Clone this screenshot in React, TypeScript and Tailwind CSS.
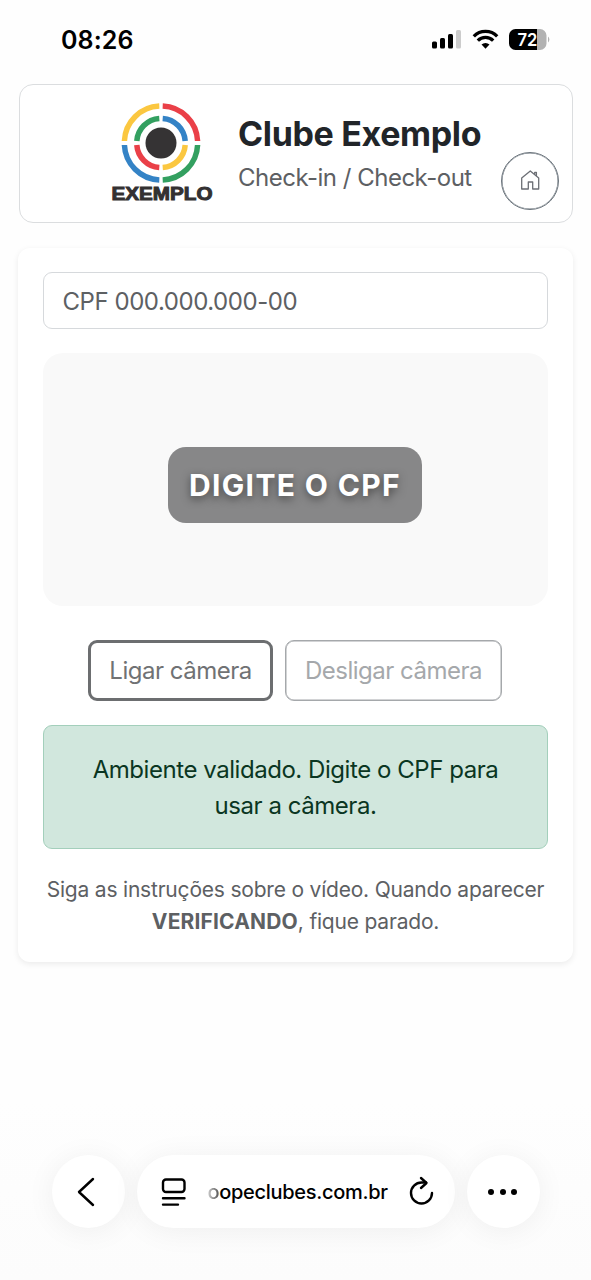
import React from "react";

const StatusBar: React.FC = () => {
  return (
    <div className="flex items-start justify-between h-[84px] pl-[61px] pr-[40px] pt-[22px] text-black">
      <span className="text-[25px] leading-9 font-semibold tracking-[0.1px]">08:26</span>
      <svg width="120" height="24" viewBox="0 0 120 24" className="mt-[6px]">
        <rect x="1" y="13.5" width="5" height="7" rx="1.5" />
        <rect x="9" y="10" width="5" height="10.5" rx="1.5" />
        <rect x="17" y="6" width="5" height="14.5" rx="1.5" />
        <rect x="25" y="2" width="5" height="18.5" rx="1.5" fill="#cccccc" />
        <g fill="none" stroke="#000" strokeWidth="3.3">
          <path d="M42.8 8.3a16.3 16.3 0 0 1 23.4 0" />
          <path d="M46.8 12.6a10.7 10.7 0 0 1 15.4 0" />
        </g>
        <path d="M54.5 20.8l-4-4.2a5.8 5.8 0 0 1 8 0z" />
        <path d="M84.5 1H106v21H84.5a6.5 6.5 0 0 1-6.5-6.5v-8a6.5 6.5 0 0 1 6.5-6.5z" />
        <path d="M106 1h3a6.5 6.5 0 0 1 6.5 6.5v8a6.5 6.5 0 0 1-6.5 6.5h-3z" fill="#b2b2b2" />
        <path d="M117 8.5a4 4 0 0 1 0 6z" fill="#b2b2b2" />
        <text x="86.5" y="17.5" fontSize="17.5" fontWeight="600" fill="#fff" textLength="20" lengthAdjust="spacingAndGlyphs">
          72
        </text>
      </svg>
    </div>
  );
};

const Logo: React.FC = () => {
  return (
    <svg width="104" height="102" viewBox="0 0 104 102" className="-mt-[2px]">
      <g fill="none" strokeWidth="5.5">
        <path d="M13.4 39A36.5 36.5 0 0 1 48.3 4.1" stroke="#fbc740" />
        <path d="M51.7 4.1A36.5 36.5 0 0 1 86.6 39" stroke="#ea4048" />
        <path d="M86.6 43A36.5 36.5 0 0 1 51.7 77.9" stroke="#33a060" />
        <path d="M48.3 77.9A36.5 36.5 0 0 1 13.4 43" stroke="#3483c6" />
        <path d="M25.8 39A24.3 24.3 0 0 1 48.3 16.5" stroke="#33a060" />
        <path d="M51.7 16.5A24.3 24.3 0 0 1 74.2 39" stroke="#3483c6" />
        <path d="M74.2 43A24.3 24.3 0 0 1 51.7 65.5" stroke="#fbc740" />
        <path d="M48.3 65.5A24.3 24.3 0 0 1 25.8 43" stroke="#ea4048" />
      </g>
      <circle cx="50" cy="41" r="15.500" fill="#353334" />
      <text
        x="0.5"
        y="97.5"
        fontFamily="Liberation Sans"
        fontSize="18.5"
        fontWeight="700"
        fill="#333132"
        stroke="#333132"
        strokeWidth="1"
        textLength="101"
        lengthAdjust="spacingAndGlyphs"
      >
        EXEMPLO
      </text>
    </svg>
  );
};

const Header: React.FC = () => {
  return (
    <header className="flex items-center h-[139px] mx-[18.5px] pl-[91px] pr-[12.5px] border border-[#dbdddf] rounded-[14px] bg-white">
      <Logo />
      <div className="ml-[23.5px] mt-[2px] whitespace-nowrap">
        <h1 className="text-[34px] leading-[44px] font-bold tracking-[-0.35px] text-[#212529]">Clube Exemplo</h1>
        <p className="mt-[2px] text-[24px] leading-[40px] tracking-[-0.5px] text-[#5d6063]">Check-in / Check-out</p>
      </div>
      <button className="flex items-center justify-center shrink-0 size-[58px] ml-auto self-end mb-[12px] rounded-full border border-[#6c757d] text-[#6c6f75] shadow-[inset_0_0_0_0.5px_#6c757d]">
        <svg width="20" height="20" viewBox="0 0 20 20" fill="none" stroke="currentColor" strokeWidth="1.3" strokeLinejoin="round" className="-mt-[2px]">
          <path d="M1.700 8L10.300 1l8.400 7v11h-6v-7H8.300v7H1.700z" />
          <path d="M14.700 4.500V2.300h1.700V6" />
        </svg>
      </button>
    </header>
  );
};

const CheckInCard: React.FC = () => {
  return (
    <main className="mt-[25px] mx-[18px] h-[714px] px-[25px] pt-[24px] rounded-[12px] bg-white shadow-[0_2px_6px_rgba(0,0,0,0.08)]">
      <input
        type="text"
        placeholder="CPF 000.000.000-00"
        className="block w-full h-[57px] pl-[18.5px] pt-[1px] text-[24px] tracking-[-0.45px] border border-[#d6d9dc] rounded-[9px] placeholder:text-[#5d6063] focus:outline-none"
      />

      <div className="flex items-center justify-center h-[253px] mt-[24px] rounded-[20px] bg-[#f9f9f9]">
        <div className="flex items-center justify-center w-[254px] h-[76px] mt-[10px] mr-px pt-[1px] rounded-[18px] bg-[#878788] text-white text-[30px] font-bold tracking-[1.35px] whitespace-nowrap [text-shadow:0_3px_9px_rgba(0,0,0,0.5)]">
          DIGITE O CPF
        </div>
      </div>

      <div className="flex justify-center gap-[12px] mt-[34px] mr-px text-[24px] tracking-[-0.5px] whitespace-nowrap">
        <button className="w-[185px] h-[61px] pt-[1px] border-[3px] border-[#6c6e70] rounded-[9px] text-[#707274]">
          Ligar câmera
        </button>
        <button className="w-[217px] h-[61px] pt-[1px] border border-[#a5a8ab] rounded-[9px] text-[#a5a8ab] shadow-[inset_0_0_0_0.5px_#a5a8ab]">
          Desligar câmera
        </button>
      </div>

      <div className="h-[124px] mt-[24px] pt-[26px] border border-[#a3cfbb] rounded-[9px] bg-[#d1e7dd] text-center text-[24px] leading-[36px] tracking-[-0.45px] text-[#0a3622] whitespace-nowrap">
        Ambiente validado. Digite o CPF para
        <br />
        usar a câmera.
      </div>

      <p className="mt-[25px] -mx-2 text-center text-[21px] leading-[32px] tracking-[-0.2px] text-[#5d6063] whitespace-nowrap">
        Siga as instruções sobre o vídeo. Quando aparecer
        <br />
        <strong className="font-bold tracking-[0.15px]">VERIFICANDO</strong>, fique parado.
      </p>
    </main>
  );
};

const BrowserBar: React.FC = () => {
  return (
    <nav className="flex items-start justify-center gap-[12px] h-[180px] mt-auto pt-[55px] bg-linear-to-b from-[#fefefe] to-[#fcfcfc] text-black">
      <button className="flex items-center justify-center size-[73px] rounded-full bg-white shadow-[0_3px_30px_rgba(0,0,0,0.06)]">
        <svg width="20" height="32" viewBox="0 0 20 32" fill="none" stroke="currentColor" strokeWidth="2.4" strokeLinecap="round" strokeLinejoin="round" className="-ml-[5px]">
          <path d="M17 3L3 16l14 13" />
        </svg>
      </button>
      <div className="flex items-center w-[318px] h-[73px] pl-[24px] pr-[20px] rounded-full bg-white shadow-[0_3px_30px_rgba(0,0,0,0.06)]">
        <svg width="26" height="32" viewBox="0 0 26 32" fill="none" stroke="currentColor" strokeWidth="2.4" strokeLinecap="round">
          <rect x="2" y="3.5" width="21.5" height="12.5" rx="3" />
          <path d="M2 22.300h21.500M2 28.600h15" />
        </svg>
        <span className="ml-[21px] text-[20px] font-medium tracking-[-0.3px] whitespace-nowrap">
          <span className="bg-linear-to-r from-[#cccccc] to-[#555555] bg-clip-text text-transparent">o</span>opeclubes.com.br
        </span>
        <svg width="28" height="32" viewBox="0 0 28 32" fill="none" stroke="currentColor" strokeWidth="2.4" strokeLinecap="round" strokeLinejoin="round" className="ml-auto">
          <path d="M25 17A10.5 10.5 0 1 1 14.5 6.5h4.5" />
          <path d="M14 2l5.5 5-5.5 5" />
        </svg>
      </div>
      <button className="flex items-center justify-center gap-[5.5px] size-[73px] pr-px rounded-full bg-white shadow-[0_3px_30px_rgba(0,0,0,0.06)]">
        <span className="size-[6px] rounded-full bg-black" />
        <span className="size-[6px] rounded-full bg-black" />
        <span className="size-[6px] rounded-full bg-black" />
      </button>
    </nav>
  );
};

const App: React.FC = () => {
  return (
    <div className="flex flex-col w-[591px] h-[1280px] overflow-hidden bg-[#fefefe] font-[Inter,'Liberation_Sans',sans-serif]">
      <StatusBar />
      <Header />
      <CheckInCard />
      <BrowserBar />
    </div>
  );
};

export default App;
